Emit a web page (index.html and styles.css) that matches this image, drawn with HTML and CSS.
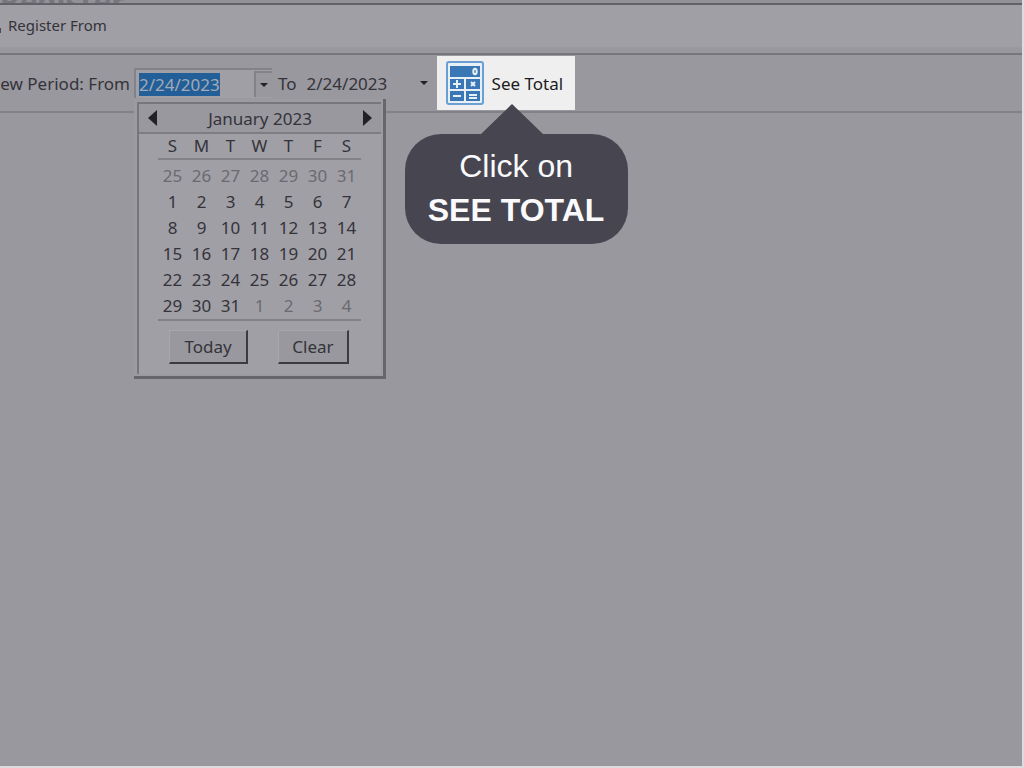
FILE: index.html
```html
<!DOCTYPE html>
<html lang="en">
<head>
  <meta charset="UTF-8">
  <meta name="viewport" content="width=device-width, initial-scale=1">
  <title>Register From</title>
  <link rel="stylesheet" href="styles.css">
</head>
<body>

  <div class="behind"><span class="behind-title">Register</span></div>

  <header class="titlebar"><i class="mark"></i>Register From</header>

  <form class="toolbar">
    <label class="period" for="from">View Period: From</label>
    <div class="date-field date-open">
      <input type="text" id="from" class="date-input" value="2/24/2023" size="9">
      <button type="button" class="drop" aria-label="Open calendar"></button>

      <div class="calendar">
        <div class="cal-inner">
          <div class="cal-head">
            <button type="button" class="nav prev" aria-label="Previous month"></button>
            <span>January 2023</span>
            <button type="button" class="nav next" aria-label="Next month"></button>
          </div>
          <table class="days">
            <thead>
              <tr><th>S</th><th>M</th><th>T</th><th>W</th><th>T</th><th>F</th><th>S</th></tr>
            </thead>
            <tbody>
              <tr class="dim"><td>25</td><td>26</td><td>27</td><td>28</td><td>29</td><td>30</td><td>31</td></tr>
              <tr><td>1</td><td>2</td><td>3</td><td>4</td><td>5</td><td>6</td><td>7</td></tr>
              <tr><td>8</td><td>9</td><td>10</td><td>11</td><td>12</td><td>13</td><td>14</td></tr>
              <tr><td>15</td><td>16</td><td>17</td><td>18</td><td>19</td><td>20</td><td>21</td></tr>
              <tr><td>22</td><td>23</td><td>24</td><td>25</td><td>26</td><td>27</td><td>28</td></tr>
              <tr><td>29</td><td>30</td><td>31</td><td class="dim">1</td><td class="dim">2</td><td class="dim">3</td><td class="dim">4</td></tr>
            </tbody>
          </table>
          <div class="cal-actions">
            <button type="button" class="cal-btn today">Today</button>
            <button type="button" class="cal-btn clear">Clear</button>
          </div>
        </div>
      </div>
    </div>

    <label class="to" for="to">To</label>
    <div class="date-field">
      <input type="text" id="to" class="date-input" value="2/24/2023" size="9">
      <button type="button" class="drop" aria-label="Open calendar"></button>
    </div>

    <div class="spot">
      <button type="button" class="see-total">
        <svg class="calc" viewBox="0 0 38 44" width="38" height="44">
          <rect x="1" y="1" width="36" height="42" rx="2" fill="#e9eff6" stroke="#6a9fd2" stroke-width="2"/>
          <g fill="#3a77b5">
            <rect x="4" y="5" width="30" height="11"/>
            <rect x="4" y="18" width="14" height="10"/>
            <rect x="20" y="18" width="14" height="10"/>
            <rect x="4" y="30" width="14" height="10"/>
            <rect x="20" y="30" width="14" height="10"/>
          </g>
          <g fill="none" stroke="#e9eff6" stroke-width="2">
            <ellipse cx="29" cy="10.500" rx="1.700" ry="2.800"/>
            <path d="M7 23h8M11 19v8M25 21l4 4M29 21l-4 4M7 35h8M23 34h8M23 37h8"/>
          </g>
        </svg>
        <span>See Total</span>
      </button>
      <div class="callout" role="tooltip">Click on<br><b>SEE TOTAL</b></div>
    </div>
  </form>

  <main class="content"></main>

  <script>
    const from = document.getElementById("from");
    from.focus();
    from.select();
  </script>

</body>
</html>
```
FILE: styles.css
```css
* {
  box-sizing: border-box;
}
body {
  margin: 0;
  min-height: 100vh;
  display: flex;
  flex-direction: column;
  background-color: #99989e;
  border-right: 2px solid #dcdcde;
  border-bottom: 2px solid #dcdcde;
  font-family: "Noto Sans", "Open Sans", sans-serif;
  font-size: 17px;
  color: #34333a;
  overflow-x: hidden;
}
button, input {
  font: inherit;
  color: inherit;
  border: none;
  background: none;
  padding: 0;
  margin: 0;
}
.behind {
  height: 3px;
  overflow: hidden;
  background-color: #929197;
  display: flex;
  align-items: center;
}
.behind-title {
  font-size: 30px;
  font-weight: bold;
  line-height: 30px;
  color: #77767c;
}
.titlebar {
  height: 52px;
  display: flex;
  align-items: center;
  gap: 7px;
  padding-bottom: 8px;
  border-top: 2px solid #626168;
  border-bottom: 2px solid #77767c;
  background: linear-gradient(#a09fa5 41px, #99989e 43px);
  font-size: 15px;
  white-space: nowrap;
}
.mark {
  width: 1px;
  height: 5px;
  margin-top: 11px;
  background-color: #4c4b52;
}
.toolbar {
  height: 58px;
  display: flex;
  align-items: center;
  border-bottom: 2px solid #828187;
  white-space: nowrap;
}
.period {
  width: 130px;
  display: flex;
  justify-content: flex-end;
}
.date-field {
  position: relative;
  display: flex;
  align-items: center;
  width: 126px;
  height: 30px;
}
.date-open {
  width: 138px;
  margin-left: 4px;
  padding-left: 3px;
  border-top: 2px solid #838288;
  border-left: 2px solid #838288;
  background-color: #a09fa5;
}
.date-input {
  flex: 1;
  min-width: 0;
  height: 24px;
  outline: none;
}
.date-input::selection {
  background-color: #225f98;
  color: #a3a9b5;
}
.drop {
  width: 18px;
  height: 26px;
  display: flex;
  align-items: center;
  justify-content: center;
}
.drop::before {
  content: "";
  border: 4px solid transparent;
  border-top-color: #222127;
  border-bottom: none;
}
.date-open .drop {
  border-left: 2px solid #838288;
  border-top: 2px solid #838288;
  background-color: #99989e;
}
.to {
  padding: 0 10px 0 6px;
}
.calendar {
  position: absolute;
  top: 29px;
  left: -2px;
  z-index: 1;
  width: 252px;
  padding: 3px 2px 2px 3px;
  background-color: #9c9ba1;
  border-right: 3px solid #67666c;
  border-bottom: 3px solid #67666c;
}
.cal-inner {
  border-top: 2px solid #77767c;
  border-left: 2px solid #77767c;
  background-color: #a09fa5;
}
.cal-head {
  height: 30px;
  padding: 0 9px;
  display: flex;
  align-items: center;
  justify-content: space-between;
  border-bottom: 2px solid #7e7d83;
  background-color: #99989e;
}
.nav {
  border: 8px solid transparent;
}
.prev {
  border-left: none;
  border-right: 9px solid #222127;
}
.next {
  border-right: none;
  border-left: 9px solid #222127;
}
.days {
  width: 203px;
  margin-left: 19px;
  border-collapse: collapse;
  table-layout: fixed;
  border-bottom: 2px solid #828187;
}
.days th, .days td {
  padding: 0;
  height: 26px;
  line-height: 26px;
  text-align: center;
  font-weight: normal;
}
.days th {
  height: 24px;
  line-height: 24px;
  border-bottom: 2px solid #828187;
}
.days tbody tr:first-child td {
  padding-top: 3px;
}
.days .dim {
  color: #6b6a70;
}
.cal-actions {
  display: flex;
  justify-content: space-between;
  padding: 9px 32px 10px 30px;
}
.cal-btn {
  height: 34px;
  background-color: #99989e;
  border-top: 1px solid #a7a6ac;
  border-left: 1px solid #a7a6ac;
  border-right: 2px solid #3c3b42;
  border-bottom: 2px solid #3c3b42;
}
.today {
  width: 79px;
}
.clear {
  width: 71px;
}
.spot {
  position: relative;
  margin-left: 4px;
}
.see-total {
  width: 138px;
  height: 54px;
  padding-left: 9px;
  display: flex;
  align-items: center;
  gap: 8px;
  background-color: #efefef;
  color: #1c1b20;
}
.callout {
  position: absolute;
  top: 78px;
  left: -32px;
  width: 223px;
  height: 110px;
  padding-top: 10px;
  border-radius: 36px;
  background-color: #464550;
  color: #fafafc;
  font-family: "Liberation Sans", Arial, sans-serif;
  font-size: 32px;
  line-height: 44px;
  text-align: center;
}
.callout::before {
  content: "";
  position: absolute;
  bottom: 100%;
  left: 76px;
  border: 31px solid transparent;
  border-top: none;
  border-bottom: 30px solid #464550;
}
.content {
  flex: 1;
}
```
